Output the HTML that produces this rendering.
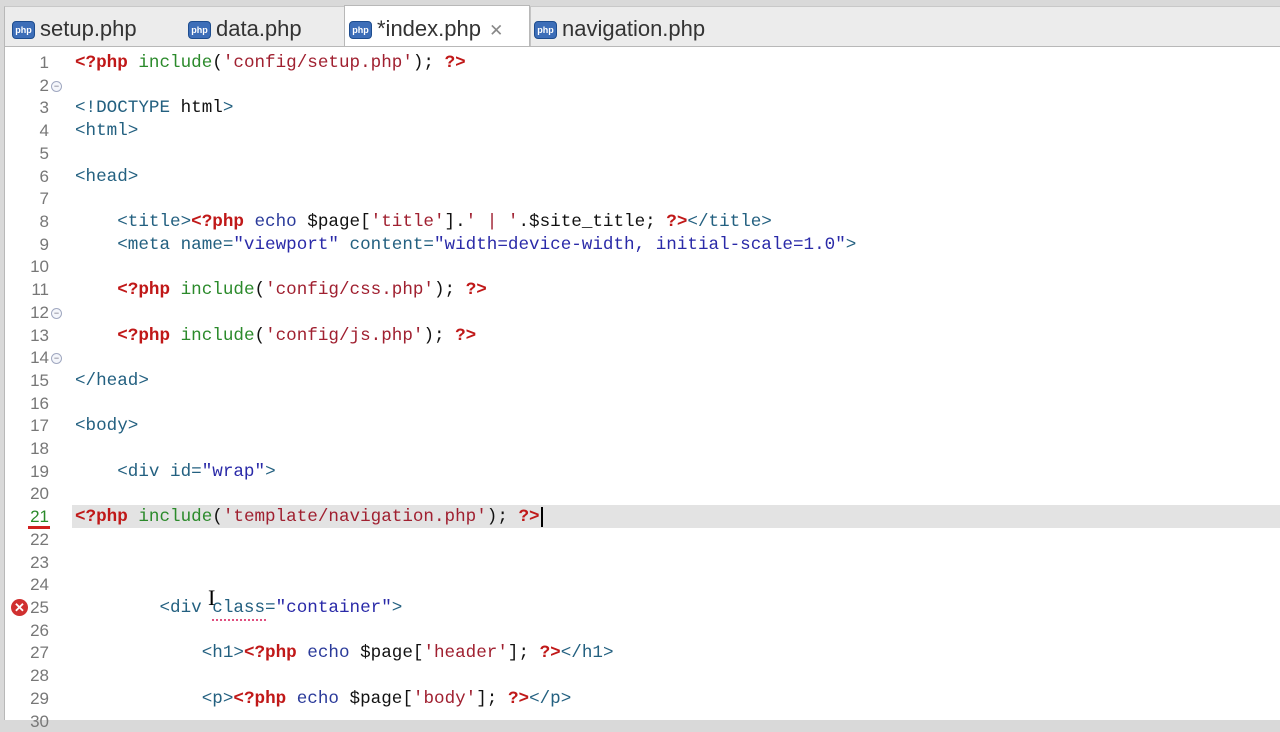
<!DOCTYPE html>
<html><head><style>
body{margin:0;width:1280px;height:720px;overflow:hidden;background:#d9d9d9;font-family:"Liberation Sans",sans-serif;position:relative}
.tabs{position:absolute;left:4px;top:6px;right:0;height:40px;background:#ececec;border-left:1px solid #b8b8b8;border-top:1px solid #c8c8c8}
.tab{position:absolute;top:0;height:40px;font-size:22px;color:#333;line-height:44px}
.tab.act{background:#fff;border:1px solid #b8b8b8;border-bottom:none;top:-2px;height:43px;line-height:46px}
.ico{display:inline-block;width:21px;height:16px;border-radius:4px;background:#3d6eb8;color:#fff;font-size:9px;line-height:16px;text-align:center;font-weight:bold;vertical-align:3px;margin-right:5px;border:1px solid #1e4d8f}
.ed{position:absolute;left:4px;top:46px;right:0;bottom:0;background:#fff;border-left:1px solid #b8b8b8;border-top:1px solid #b8b8b8}
.ln{position:absolute;left:0;width:49px;text-align:right;font-family:"Liberation Sans",sans-serif;font-size:17px;color:#777}
.c{position:absolute;left:75px;white-space:pre;font-family:"Liberation Mono",monospace;font-size:17.6px;color:#111}
.r{color:#c01818;font-weight:bold}.g{color:#2b8a2b}.s{color:#a02030}.t{color:#236080}.e{color:#2a3a9a}.v{color:#2a2aa8}.b{color:#1a4a9a}
.fold{position:absolute;left:51px;width:9px;height:9px;border:1px solid #a0a8c0;border-radius:50%;font-size:9px;line-height:8px;text-align:center;color:#667;background:#f4f6fb}
</style></head><body>
<div class="tabs">
<div class="tab" style="left:7px"><span class="ico">php</span>setup.php</div>
<div class="tab" style="left:183px"><span class="ico">php</span>data.php</div>
<div class="tab act" style="left:339px;width:180px;padding-left:4px"><span class="ico">php</span>*index.php <span style="color:#888;font-size:17px;margin-left:2px">✕</span></div>
<div class="tab" style="left:525px;border-left:1px solid #c4c4c4;padding-left:3px"><span class="ico">php</span>navigation.php</div>
</div>
<div class="ed"></div>
<div style="position:absolute;left:72px;top:505px;right:0;height:23px;background:#e3e3e3"></div>
<div style="position:absolute;left:28px;top:526px;width:22px;height:3px;background:#d02020"></div>
<div style="position:absolute;left:541px;top:507px;width:2px;height:20px;background:#000"></div>
<div id="code"></div>
<script>
const L=[
'<span class="r">&lt;?php</span> <span class="g">include</span>(<span class="s">\'config/setup.php\'</span>); <span class="r">?&gt;</span>',
'',
'<span class="t">&lt;!DOCTYPE</span> html<span class="t">&gt;</span>',
'<span class="t">&lt;html&gt;</span>','',
'<span class="t">&lt;head&gt;</span>','',
'    <span class="t">&lt;title&gt;</span><span class="r">&lt;?php</span> <span class="e">echo</span> $page[<span class="s">\'title\'</span>].<span class="s">\' | \'</span>.$site_title; <span class="r">?&gt;</span><span class="t">&lt;/title&gt;</span>',
'    <span class="t">&lt;meta name=</span><span class="v">"viewport"</span> <span class="t">content=</span><span class="v">"width=device-width, initial-scale=1.0"</span><span class="t">&gt;</span>',
'',
'    <span class="r">&lt;?php</span> <span class="g">include</span>(<span class="s">\'config/css.php\'</span>); <span class="r">?&gt;</span>','',
'    <span class="r">&lt;?php</span> <span class="g">include</span>(<span class="s">\'config/js.php\'</span>); <span class="r">?&gt;</span>','',
'<span class="t">&lt;/head&gt;</span>','',
'<span class="t">&lt;body&gt;</span>','',
'    <span class="t">&lt;div id=</span><span class="v">"wrap"</span><span class="t">&gt;</span>','',
'<span class="r">&lt;?php</span> <span class="g">include</span>(<span class="s">\'template/navigation.php\'</span>); <span class="r">?&gt;</span>',
'','','',
'        <span class="t">&lt;div class=</span><span class="v">"container"</span><span class="t">&gt;</span>','',
'            <span class="t">&lt;h1&gt;</span><span class="r">&lt;?php</span> <span class="e">echo</span> $page[<span class="s">\'header\'</span>]; <span class="r">?&gt;</span><span class="t">&lt;/h1&gt;</span>','',
'            <span class="t">&lt;p&gt;</span><span class="r">&lt;?php</span> <span class="e">echo</span> $page[<span class="s">\'body\'</span>]; <span class="r">?&gt;</span><span class="t">&lt;/p&gt;</span>',
''];
let h='';
L.forEach((s,i)=>{const y=52+i*22.71;const n=i+1;
h+=`<div class="ln" style="top:${y+1}px;${n==21?'color:#2a8a2a':''}">${n}</div><div class="c" style="top:${y}px;line-height:23px">${s}</div>`;
if([2,12,14].includes(n))h+=`<div class="fold" style="top:${y+6}px">−</div>`;});
h+=`<div style="position:absolute;left:11px;top:599px;width:17px;height:17px;border-radius:50%;background:#d03030;color:#fff;font-size:13px;line-height:17px;text-align:center;font-weight:bold">✕</div>`;
h+=`<div style="position:absolute;left:212px;top:616px;width:54px;height:3px;border-bottom:2px dotted #e05080"></div>`;
h+=`<div style="position:absolute;left:208px;top:585px;font-size:22px;color:#000;font-family:'Liberation Serif',serif">I</div>`;
document.getElementById('code').innerHTML=h;
</script>
</body></html>
